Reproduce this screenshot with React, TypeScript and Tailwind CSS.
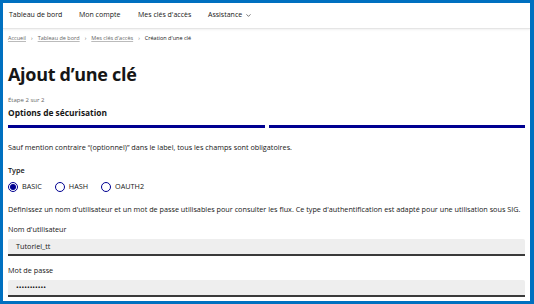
import { ChevronDown } from "lucide-react";

const font = { fontFamily: '"Open Sans", "Liberation Sans", sans-serif' };

function Radio({ label, checked }: { label: string; checked?: boolean }) {
  return (
    <label className="flex items-center gap-[4px]">
      <span className="flex h-[10px] w-[10px] items-center justify-center rounded-full border border-[#000091]">
        {checked && <span className="h-[6px] w-[6px] rounded-full bg-[#000091]" />}
      </span>
      <span className="text-[7.25px] text-[#161616]">{label}</span>
    </label>
  );
}

function Field({ label, value }: { label: string; value: string }) {
  return (
    <div>
      <p className="h-[10px] text-[7.25px] leading-[10px] text-[#161616]">{label}</p>
      <div className="mt-[5px] flex h-[17px] items-center rounded-t-[2px] border-b-2 border-[#3a3a3a] bg-[#eeeeee] px-[8px] text-[7.25px] text-[#161616]">
        {value}
      </div>
    </div>
  );
}

export default function App() {
  return (
    <div
      className="h-[304px] w-[534px] overflow-hidden border-[3px] border-r-[4px] border-[#0070c0] bg-white"
      style={font}
    >
      {/* Top nav */}
      <nav className="flex h-[26px] items-center border-b border-[#e5e5e5] pl-[6px] text-[7px] text-[#161616] shadow-[0_1px_2px_rgba(0,0,0,0.06)]">
        <span className="w-[70px]">Tableau de bord</span>
        <span className="w-[59px]">Mon compte</span>
        <span className="w-[70px]">Mes clés d'accès</span>
        <span className="flex items-center gap-[3px]">
          Assistance <ChevronDown size={7} strokeWidth={2} />
        </span>
      </nav>

      <main className="px-[5px]">
        {/* Breadcrumb */}
        <div className="mt-[5px] flex items-center gap-[5px] text-[5.5px] text-[#666666]">
          <span className="underline decoration-[#bbbbbb]">Accueil</span>
          <span>›</span>
          <span className="underline decoration-[#bbbbbb]">Tableau de bord</span>
          <span>›</span>
          <span className="underline decoration-[#bbbbbb]">Mes clés d'accès</span>
          <span>›</span>
          <span className="text-[#161616]">Création d'une clé</span>
        </div>

        <h1 className="mt-[20px] text-[18px] font-bold leading-[24px] tracking-[-0.3px] text-[#161616]">
          Ajout d’une clé
        </h1>

        <p className="mt-[10px] text-[6px] leading-[8px] text-[#666666]">Étape 2 sur 2</p>
        <p className="mt-[3px] text-[8.4px] font-bold leading-[12px] text-[#161616]">
          Options de sécurisation
        </p>

        <div className="mt-[6px] flex gap-[4px]">
          <div className="h-[3px] flex-1 bg-[#000091]" />
          <div className="h-[3px] flex-1 bg-[#000091]" />
        </div>

        <p className="mt-[14px] text-[7.25px] leading-[10px] text-[#161616]">
          Sauf mention contraire “(optionnel)” dans le label, tous les champs sont obligatoires.
        </p>

        <p className="mt-[13px] text-[7.25px] font-semibold leading-[10px] text-[#161616]">Type</p>
        <div className="mt-[6px] flex items-center gap-[13px]">
          <Radio label="BASIC" checked />
          <Radio label="HASH" />
          <Radio label="OAUTH2" />
        </div>

        <p className="mt-[12px] text-[7.25px] leading-[10px] text-[#161616]">
          Définissez un nom d'utilisateur et un mot de passe utilisables pour consulter les flux. Ce type
          d'authentification est adapté pour une utilisation sous SIG.
        </p>

        <div className="mt-[10px] flex flex-col gap-[9px]">
          <Field label="Nom d'utilisateur" value="Tutoriel_tt" />
          <Field label="Mot de passe" value="•••••••••••" />
        </div>
      </main>
    </div>
  );
}
